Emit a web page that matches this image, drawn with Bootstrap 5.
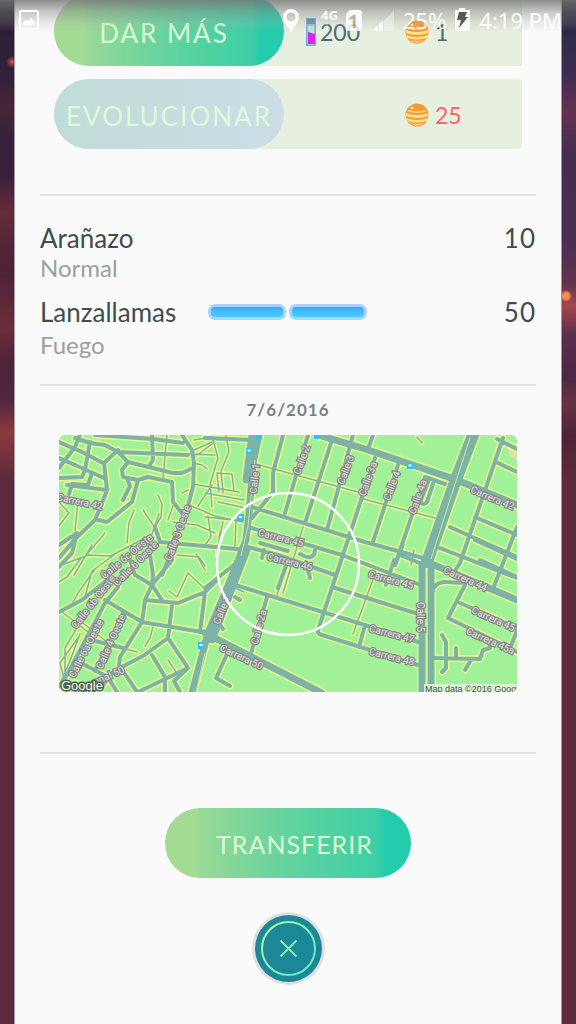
<!DOCTYPE html>
<html lang="es">
<head>
<meta charset="utf-8">
<meta name="viewport" content="width=device-width, initial-scale=1">
<title>Detalle</title>
<link href="https://cdn.jsdelivr.net/npm/bootstrap@5.3.0/dist/css/bootstrap.min.css" rel="stylesheet">
<style>
body{font-family:Lato,"Liberation Sans",sans-serif;color:#424c49;background-color:#5c2a3a;
 background-image:radial-gradient(circle at 12px 62px,#ff5a45 0,#ff5a4588 2px,transparent 6px),
 radial-gradient(circle at calc(100% - 10px) 296px,#ff9a50 0,#ff8a4f 3px,transparent 6px),
 linear-gradient(#1e1726,#2d2039 40px,#32213c 80px,#452836 105px,#36203a 140px,#39203a 175px,#662c38 212px,#532436 245px,#4e2236 275px,#6c2d3b 330px,#4e2438 360px,#4f263e 400px,#8d393d 432px,#5c2a3a 480px),
 linear-gradient(#1e1726,#302c4d 40px,#3f2b50 75px,#653250 112px,#452c50 150px,#4a2d52 240px,#65344f 285px,#a4454f 305px,#5b2f4c 335px,#4a2845 375px,#673242 405px,#4c2238 435px,#5c2a3a 480px);
 background-size:100% 100%,100% 100%,50% 100%,50% 100%;background-position:0 0,0 0,0 0,100% 0;background-repeat:no-repeat}
.sheet{margin:0 14px;background:#fafafa;border:solid #a095a0;border-width:0 1px;padding:0 25px}
.status{height:40px;padding:0 14px 0 19px;background:linear-gradient(#777,#8888 12px,#aaa4 23px,transparent 32px);color:#fff;font:400 22px/38px "Noto Sans",sans-serif;opacity:.82}
.actions{margin:-4px 14px 0}
.action{background:#e7efe0;height:70px;border-radius:35px 4px 4px 35px;margin-bottom:13px;color:#466f70;font-size:23px;line-height:32px}
.action span{padding-top:1px}
.pill{height:70px;border:0;border-radius:35px;color:#dcfad2;font-size:26px;letter-spacing:2px;padding:3px 0 0;
 background:linear-gradient(90deg,#a3db94 13%,#97d997 15%,#62d39f 50%,#3dcfa6 86%,#25ccab 89%)}
.action .pill{width:230px}
.more{padding-right:10px}
.pill:disabled{background:linear-gradient(90deg,#bfddd8,#ccdee7);color:#defadb}
.dust{width:121px;padding-left:22px}
.candy{gap:6px}
.need{color:#ff6268}
.rule{height:2px;margin:0;border:0;background:#e2e2e2;opacity:1}
.first{margin-top:45px}
.moves{font-size:26px;line-height:32px;padding:26px 0 25px}
.kind{font-size:24px;line-height:28px;color:#9ba09e}
.charged{padding:14px 0 3px}
.lbl{width:168px}
.points{letter-spacing:1px}
.bars{gap:3px}
.energy{width:78px;height:16px;border:3px solid #a9d2ff;border-radius:7px;background:linear-gradient(#3ea0fc,#43bdfb 40%,#45cbf9)}
.caught{font-size:17px;line-height:24px;color:#7b827f;font-weight:700;letter-spacing:1px;padding:12px 0 13px}
.mapbox{margin:0 19px 60px;border-radius:6px}
.send{width:246px;padding-left:13px;margin:54px 0 34px;font-size:25px;letter-spacing:1px}
.shut{width:73px;height:73px;border:0;background:none}
.w1{stroke-width:calc(1.5px + var(--rim))}.w2{stroke-width:calc(4px + var(--rim))}.w3{stroke-width:calc(7px + var(--rim))}.w4{stroke-width:calc(12px + var(--rim))}
.rim{--rim:3px;stroke:#e9f78b}.road{--rim:0px;stroke:#7bb4a7}
.names{font:10px Roboto,sans-serif;fill:#e4e0e4;stroke:#878687;stroke-width:2.4px;paint-order:stroke;text-anchor:middle}
</style>
</head>
<body>
<svg width="0" height="0" class="position-absolute" aria-hidden="true"><defs>
<g id="candy"><circle cx="12" cy="12" r="11.5" fill="#f39a32"/><path d="M1 10q11 4 22 0l.4 3q-11 4-22.8 0zM1 15q11 4 22 0l-1.5 3q-9 3-19 0zM4 7q8 3 16 0l2 1q-10 4-20 0zM5 20q7 2 14 0-7 5-14 0z" fill="#ffe08c"/><circle cx="7" cy="5" r="1.3" fill="#fff2cf"/></g>
</defs></svg>
<header class="status position-absolute top-0 start-0 end-0 d-flex align-items-center">
 <svg width="20" height="20" viewBox="0 0 20 20" aria-hidden="true"><rect x="1" y="1" width="18" height="18" rx="1" fill="none" stroke="#fff" stroke-width="2"/><path d="M4 15v-2l3-3 2 1 3-3 4 4v3z" fill="#fff"/></svg>
 <svg class="ms-auto" width="112" height="28" viewBox="277 5 112 28" aria-hidden="true"><path fill="#fff" fill-rule="evenodd" d="M285 8a8 8 0 0 0-8 8c0 6 5 9 8 15 3-6 8-9 8-15a8 8 0 0 0-8-8zm0 3.500a4.500 4.500 0 1 1 0 9 4.500 4.500 0 0 1 0-9zM344 9h9q3 0 3 3v16q0 2-3 2h-10q-3 0-3-2V13z"/><text x="315" y="19" font-size="13" font-weight="700" fill="#fff">4G</text><path d="M321 22v7m-2-2 2 2 2-2M327 29v-7m-2 2 2-2 2 2" stroke="#fff" fill="none" opacity=".6"/><text x="342" y="27" font-size="18" font-weight="700" fill="#a3aaa0">1</text><path d="M368 30v-2l4-4v6zm5 0v-7l4-3v10z" fill="#fff"/><path d="M378 30V20l10-11v21z" fill="#fff" opacity=".4"/></svg>
 <span class="ms-2">25%</span>
 <svg class="ms-2" width="17" height="24" viewBox="0 0 17 24" aria-hidden="true"><path d="M5 0h6v2h5v21H1V2h4z" fill="#fff"/><path d="M5 4h8l-2 5h3L5 20l2-8H3z" fill="#343b37"/></svg>
 <span class="ms-2">4:19 PM</span>
</header>
<main class="sheet min-vh-100 overflow-hidden">
 <section class="actions">
  <div class="action d-flex align-items-center">
   <button class="pill more" type="button">DAR MÁS</button>
   <span class="dust d-flex align-items-center gap-1"><svg width="10" height="28" viewBox="0 0 10 28" aria-hidden="true"><rect x=".8" y=".8" width="8.400" height="26.400" fill="#b1ead9" stroke="#6ea5dd" stroke-width="1.500"/><path d="M1 1h8v5H1z" fill="#4d96a5"/><path d="M1 7h8" stroke="#ca83df"/><path d="M2 14l7 2v10H2z" fill="#de25ed"/></svg>200</span>
   <span class="candy d-flex align-items-center"><svg width="24" height="24" aria-hidden="true"><use href="#candy"/></svg>1</span>
  </div>
  <div class="action d-flex align-items-center">
   <button class="pill" type="button" disabled>EVOLUCIONAR</button>
   <span class="dust"></span>
   <span class="candy need d-flex align-items-center"><svg width="24" height="24" aria-hidden="true"><use href="#candy"/></svg>25</span>
  </div>
 </section>
 <hr class="rule first">
 <section class="moves">
  <div class="d-flex align-items-center"><span class="lbl">Arañazo</span><span class="points ms-auto">10</span></div>
  <div class="kind">Normal</div>
  <div class="charged d-flex align-items-center"><span class="lbl">Lanzallamas</span><span class="bars d-flex"><span class="energy"></span><span class="energy"></span></span><span class="points ms-auto">50</span></div>
  <div class="kind">Fuego</div>
 </section>
 <hr class="rule">
 <div class="caught text-center">7/6/2016</div>
 <div class="mapbox overflow-hidden">
 <svg class="d-block w-100" viewBox="59 435 458 257" role="img" aria-label="Mapa">
 <path fill="#a1f198" d="M59 435h458v257H59z"/><path fill="#e2dfae" d="M508 449l4-7 6 2v16l-9-4z"/>
 <defs><g id="streets" fill="none" stroke-linejoin="round" stroke-linecap="round">
  <g class="w1"><path d="M167 435l-4 43M158 495l4 9-1 13-5 8M168 520l5-14M143 510l16 24M188 454l27 1M193 484l46 8M189 505l26 11 28 6M173 522l24 3 18 8M88 553l17-20M59 566l29-11 22 1 20-10 22-12 7-20M78 500l-3 31M59 502l10 11-10 13M193 463l9 2 5 4M182 493l6-3M212 444l-16 12M212 485l-14 21M127 543l2-20 5-13M194 440l18-3M194 450l18-8M226 435l3 17-8 19 2 22M213 440l5 18-8 26 2 23M219 492l-2-19 15 1 2 17M205 517l37 4M205 493l39 7M218 502l28 6M205 545l34 3M208 516l3 21-6 8M217 556l3-24M236 519l-1 27M223 522l-3 14M252 463l113 31M360 498l75 20M303 527l-20 66M288 562l-11 33M375 574l-22 60M417 437l5 6M404 545l-7 18M414 550l-3 15M233 587l11 5M79 620l32 25 26 7M62 612l26 20M78 626l-13 22 0 24M59 582l8-5 14-19M85 597l7-26 22-16M70 608l8-15 17-24M188 573l-11 24-8-6M188 573l16 15M153 627l-3 11-5 8M168 660l8 12M59 686l11-25 10-27M63 675l-3-12 18-25M101 570l12 8M92 545l-18 30M177 555l22 2 6 9M205 570l-9-16"/></g>
  <g class="w2"><path d="M75 438l15 5 15 2 13 7 70 3M59 442l23 10 21 11M59 458l16 7 29 13M118 450l-14 13 3 27-5 13-7 17-19 18-17 20M80 435l-5 12-16 21M90 442l-5 28-3 7-23 1M67 485l40 5M92 473l-4 12-16-1-3 10M118 452l10 10 45 11h9l11-5M128 462l-6 8 1 7 15 3 10-3 24 5 1 20 9 11M138 480l-6 22-25 20-9-2M127 478l3 8-7 14M152 435l1 25-4 6M182 435l10 15 2 13-1 24-7 26-14 30-2 20M59 545l18-12-5 20-13 14M155 527l5 15 55 5 31 3M95 435l58 4 30 4M205 438l48 2"/>
  <path d="M283 435l-10 38v19l-21 26M308 435l-23 78M332 440l-27 83M353 435l-26 95M375 458l-57 172q-1 4 4 5l96 30M373 435l-5 14M398 465l-25 77M425 477l-30 88M252 507l113 35 58 16M248 527l94 28 76 29M248 547l30 8 57 20M260 543l28 8M264 550l-2 8M300 554q14 8 15-4M235 585l130 40 53 17M332 587l83 26M267 597l-17 60M287 563l-9 25M365 625l-6 22M308 570l2 8M228 652l-12 26 14 8M205 588l30-24M235 597l5 3M218 622l5 7M394 560l-8 25M428 482l-8 20q4 4 7 0l6-18M425 477l20 7M400 555l22 9"/>
  <path d="M503 438l-43 125-8 12M498 463l19 9M475 517l42 18M450 527l67 30M440 548l77 30M517 527l-24 62M475 540l42 19M465 585l-17 33 69 34M460 603l57 25M432 592q3-11 15-10l18 1M433 658l47 1 3-9 7-2v-5M442 635l4 7v26l-4 4M456 648v10M471 660l-6 10M517 630l-6 16M497 439l20 10M480 560l37 17"/>
  <path d="M59 612l23-12 24-19M172 560l-20 25-7 15-3 22-22 35-1 8 20 30M105 600l37 22 60 10M145 600l33 3 27-11 12-12M172 605l-4 33 20 30M205 592l-5 40M168 638l-25 18-29 15-14 18M152 655l13 22v15M188 668l-23 11-27 13M130 560l5 15 17 10M150 555l3 20-1 10 10 15M118 587l-13 16-37 70-9 14M123 613l-28 58M91 640l32 8M81 663l27 14 9 15M75 683l18 9M170 555l-8 20M180 692l-6-11 14-13"/></g>
  <g class="w3"><path d="M259 435l-6 28-4 50-3 27-12 31-26 62-16 60M247 550l-35 90M252 435l-6 45M318 435l47 14 42 14 50 17 60 25M205 633l117 60M427 562l90 38M422 565v127M431 570v122"/></g>
  <path class="w4" d="M475 430l-20 52-28 80"/>
 </g></defs>
 <use href="#streets" class="rim"/><use href="#streets" class="road"/>
 <path d="M470 438l-14 43-25 78M255 460l-7 66-7 30M205 653l-9 39M427 574v117" fill="none" stroke="#cbe98f"/>
 <g fill="#36bdf2"><path d="M246 448h6v6h-6zM256 435h6v4h-6zM314 435h6v4h-6zM237 514h7v7h-7zM407 463h6v6h-6zM198 642h6v7h-6z"/><path d="M247.500 449.500h3v2h-3zM239 516h3v2h-3zM408.500 464.500h3v2h-3zM199.500 644h3v2h-3z" fill="#fff"/></g>
 <g class="names">
  <text transform="translate(79 505) rotate(12)">Carrera 42</text><text transform="translate(181 534) rotate(-70)">Calle 3 Oeste</text><text transform="translate(129 559) rotate(-40)">Calle 6c Oeste</text><text transform="translate(138 566) rotate(-45)">Calle 6 Oeste</text><text transform="translate(96 604) rotate(-52)">Calle 6b Oeste</text><text transform="translate(89 650) rotate(-63)">Calle 6a Oeste</text><text transform="translate(114 643) rotate(-66)">Calle 4 Oeste</text><text transform="translate(101 683) rotate(-24)">Diagonal 50</text>
  <text transform="translate(258 479) rotate(-84)">Calle 1</text><text transform="translate(305 461) rotate(-70)">Calle 2</text><text transform="translate(349 471) rotate(-70)">Calle 3</text><text transform="translate(371 480) rotate(-70)">Calle 3a</text><text transform="translate(395 487) rotate(-70)">Calle 4</text><text transform="translate(421 498) rotate(-70)">Calle 4a</text><text transform="translate(491 501) rotate(23)">Carrera 42</text>
  <text transform="translate(280 541) rotate(14)">Carrera 45</text><text transform="translate(289 565) rotate(14)">Carrera 46</text><text transform="translate(390 583) rotate(15)">Carrera 45</text><text transform="translate(464 582) rotate(24)">Carrera 44</text><text transform="translate(225 611) rotate(-68)">Calle 1</text><text transform="translate(262 628) rotate(-75)">Calle 2a</text><text transform="translate(240 660) rotate(25)">Carrera 50</text><text transform="translate(417 617) rotate(90)">Calle 5</text><text transform="translate(391 637) rotate(14)">Carrera 47</text><text transform="translate(391 660) rotate(14)">Carrera 48</text><text transform="translate(492 622) rotate(24)">Carrera 45</text><text transform="translate(489 644) rotate(24)">Carrera 45a</text>
 </g>
 <circle cx="288" cy="564" r="71" fill="none" stroke="#fff" stroke-width="2.500"/>
 <text x="61" y="690" font-family="Liberation Sans,sans-serif" font-size="13" fill="#f5f8f4" stroke="#4e5f50" stroke-width="3" paint-order="stroke">Google</text>
 <path d="M424 684h93v8h-93z" fill="#e4f5df" opacity=".85"/><text x="425" y="692" font-family="Liberation Sans,sans-serif" font-size="9" fill="#4b4f4b">Map data ©2016 Google</text>
 </svg></div>
 <hr class="rule">
 <div class="d-flex flex-column align-items-center">
  <button class="pill send" type="button">TRANSFERIR</button>
  <button class="shut p-0" type="button" aria-label="Cerrar"><svg class="d-block" width="73" height="73" viewBox="0 0 73 73" aria-hidden="true"><defs><linearGradient id="mint" gradientUnits="userSpaceOnUse" x1="15" y1="15" x2="58" y2="58"><stop stop-color="#aef5a3"/><stop offset="1" stop-color="#5cead0"/></linearGradient></defs><circle cx="36.500" cy="36.500" r="36.500" fill="#e0e0e0"/><circle cx="36.500" cy="36.500" r="33.500" fill="#1c8796"/><g fill="none" stroke="url(#mint)"><circle cx="36.500" cy="36.500" r="26.500" stroke-width="2"/><path d="M28.500 28.500l16 16m0-16l-16 16" stroke-width="1.800"/></g></svg></button>
 </div>
</main>
<script src="https://cdn.jsdelivr.net/npm/bootstrap@5.3.0/dist/js/bootstrap.bundle.min.js"></script>
</body>
</html>
